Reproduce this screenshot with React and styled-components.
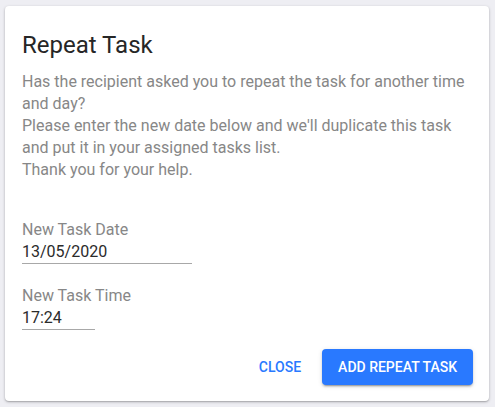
import React from "react";
import styled, { createGlobalStyle } from "styled-components";

const GlobalStyle = createGlobalStyle`
  html, body {
    margin: 0;
    background: #eeeef3;
    font-family: Roboto, "Liberation Sans", sans-serif;
  }
`;

const Page = styled.div`
  padding: 6px 6px 6px 5px;
`;

const Card = styled.div`
  width: 484px;
  height: 395px;
  box-sizing: border-box;
  background: #fff;
  border-radius: 4px;
  box-shadow: 0 1px 3px rgba(0, 0, 0, 0.25), 0 1px 1px rgba(0, 0, 0, 0.12);
  padding: 23px 16px 16px 17px;
  display: flex;
  flex-direction: column;
`;

const Title = styled.h2`
  margin: 0;
  font-size: 24px;
  line-height: 32px;
  font-weight: 400;
  color: #262626;
`;

const Message = styled.p`
  margin: 9.5px 0 0;
  font-size: 16px;
  line-height: 22px;
  color: #878787;
`;

const Field = styled.label`
  display: flex;
  flex-direction: column;
  margin-top: ${(p) => p.$top}px;
`;

const Label = styled.span`
  font-size: 16px;
  line-height: 22px;
  color: #878787;
`;

const Input = styled.input`
  width: ${(p) => p.$width}px;
  box-sizing: border-box;
  border: none;
  border-bottom: 1px solid #a8a8a8;
  padding: 0;
  margin: 0;
  font: inherit;
  font-size: 16px;
  line-height: 22px;
  height: 23px;
  color: #2b2b2b;
  background: transparent;
  outline: none;
`;

const Actions = styled.div`
  margin-top: auto;
  display: flex;
  justify-content: flex-end;
  align-items: center;
  gap: 5px;
`;

const Button = styled.button`
  height: 36px;
  padding: 0 16px;
  border: none;
  border-radius: 4px;
  font-family: inherit;
  font-size: 14px;
  font-weight: 500;
  text-transform: uppercase;
  cursor: pointer;
  background: ${(p) => (p.$primary ? "#2979ff" : "transparent")};
  color: ${(p) => (p.$primary ? "#fff" : "#2979ff")};
  box-shadow: ${(p) =>
    p.$primary
      ? "0 3px 1px -2px rgba(0,0,0,0.2), 0 2px 2px 0 rgba(0,0,0,0.14), 0 1px 5px 0 rgba(0,0,0,0.12)"
      : "none"};
`;

export default function App() {
  return (
    <Page>
      <GlobalStyle />
      <Card>
        <Title>Repeat Task</Title>
        <Message>
          Has the recipient asked you to repeat the task for another time and day?
          <br />
          Please enter the new date below and we'll duplicate this task and put it in your assigned tasks list.
          <br />
          Thank you for your help.
        </Message>
        <Field $top={38}>
          <Label>New Task Date</Label>
          <Input $width={170} defaultValue="13/05/2020" readOnly />
        </Field>
        <Field $top={21}>
          <Label>New Task Time</Label>
          <Input $width={73} defaultValue="17:24" readOnly />
        </Field>
        <Actions>
          <Button>Close</Button>
          <Button $primary>Add Repeat Task</Button>
        </Actions>
      </Card>
    </Page>
  );
}
